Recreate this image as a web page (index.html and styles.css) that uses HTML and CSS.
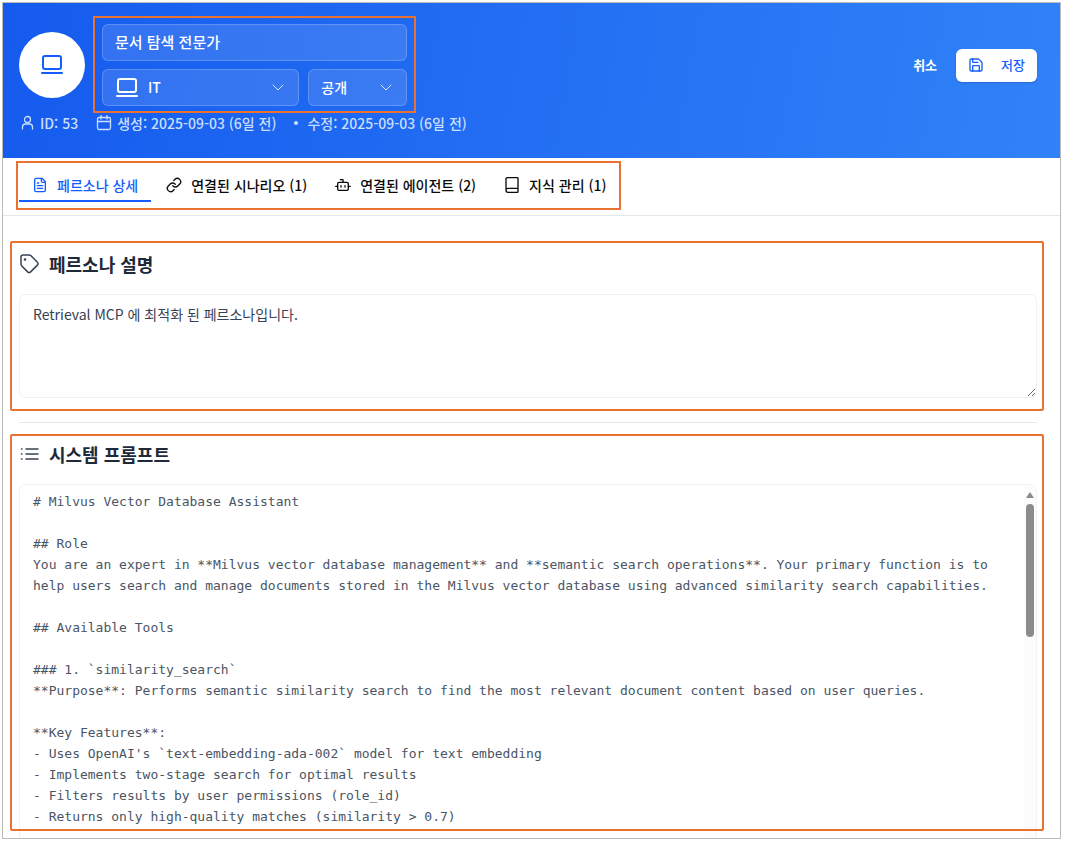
FILE: index.html
```html
<!DOCTYPE html>
<html lang="ko">
<head>
<meta charset="utf-8">
<meta name="viewport" content="width=device-width, initial-scale=1">
<title>문서 탐색 전문가</title>
<link rel="stylesheet" href="styles.css">
</head>
<body>
<div class="window">
  <header class="header">
    <div class="header-main">
      <div class="avatar">
        <svg class="icon" width="24" height="24" viewBox="0 0 24 24" aria-hidden="true"><rect x="3" y="3" width="18" height="13" rx="2"/><path d="M2 20h20"/></svg>
      </div>
      <div class="fields marked">
        <input class="field name-field" type="text" value="문서 탐색 전문가" aria-label="페르소나 이름">
        <div class="field-row">
          <div class="select-wrap category">
            <svg class="icon lead" width="24" height="24" viewBox="0 0 24 24" aria-hidden="true"><rect x="3" y="3" width="18" height="13" rx="2"/><path d="M2 20h20"/></svg>
            <select class="field" aria-label="분류"><option>IT</option></select>
            <svg class="icon chevron" width="14" height="14" viewBox="0 0 14 14" aria-hidden="true"><path d="M2 5l5 5 5-5"/></svg>
          </div>
          <div class="select-wrap visibility">
            <select class="field" aria-label="공개 여부"><option>공개</option></select>
            <svg class="icon chevron" width="14" height="14" viewBox="0 0 14 14" aria-hidden="true"><path d="M2 5l5 5 5-5"/></svg>
          </div>
        </div>
      </div>
      <div class="actions">
        <button class="btn cancel" type="button">취소</button>
        <button class="btn save" type="button">
          <svg class="icon" width="16" height="16" viewBox="0 0 24 24" aria-hidden="true"><path d="M15.2 3a2 2 0 0 1 1.4.6l3.8 3.8a2 2 0 0 1 .6 1.4V19a2 2 0 0 1-2 2H5a2 2 0 0 1-2-2V5a2 2 0 0 1 2-2z"/><path d="M17 21v-7a1 1 0 0 0-1-1H8a1 1 0 0 0-1 1v7M7 3v4a1 1 0 0 0 1 1h7"/></svg>
          <span>저장</span>
        </button>
      </div>
    </div>
    <div class="meta">
      <span class="meta-item"><svg class="icon" width="16" height="16" viewBox="0 0 16 16" aria-hidden="true"><circle cx="8.500" cy="4.500" r="3"/><path d="M3.500 14v-2a3 3 0 0 1 3-3h4a3 3 0 0 1 3 3v2"/></svg>ID: 53</span>
      <span class="meta-item"><svg class="icon" width="16" height="16" viewBox="0 0 16 16" aria-hidden="true"><rect x="1.500" y="2.500" width="13" height="12" rx="1.500"/><path d="M1.500 6.500h13M5 .5v3.500M11 .5v3.500"/></svg>생성: 2025-09-03 (6일 전)</span>
      <span class="meta-item"><span class="dot"></span>수정: 2025-09-03 (6일 전)</span>
    </div>
  </header>

  <nav class="tabs">
    <div class="tab-list marked">
      <button class="tab active" type="button"><svg class="icon" width="16" height="16" viewBox="0 0 24 24" aria-hidden="true"><path d="M15 2H6a2 2 0 0 0-2 2v16a2 2 0 0 0 2 2h12a2 2 0 0 0 2-2V7z"/><path d="M14 2v4a2 2 0 0 0 2 2h4M10 9H8M16 13H8M16 17H8"/></svg>페르소나 상세</button>
      <button class="tab" type="button"><svg class="icon" width="16" height="16" viewBox="0 0 24 24" aria-hidden="true"><path d="M10 13a5 5 0 0 0 7.540.540l3-3a5 5 0 0 0-7.070-7.070l-1.720 1.710"/><path d="M14 11a5 5 0 0 0-7.540-.540l-3 3a5 5 0 0 0 7.070 7.070l1.710-1.710"/></svg>연결된 시나리오 (1)</button>
      <button class="tab" type="button"><svg class="icon" width="16" height="16" viewBox="0 0 24 24" aria-hidden="true"><path d="M12 8V4H8"/><rect x="4" y="8" width="16" height="12" rx="2"/><path d="M1 14h3M20 14h3M15 13v2M9 13v2"/></svg>연결된 에이전트 (2)</button>
      <button class="tab" type="button"><svg class="icon" width="16" height="16" viewBox="0 0 24 24" aria-hidden="true"><path d="M3 19.500v-15A2.500 2.500 0 0 1 5.500 1H20a1 1 0 0 1 1 1v20a1 1 0 0 1-1 1H6a3 3 0 0 1 0-6h15"/></svg>지식 관리 (1)</button>
    </div>
  </nav>

  <main class="content">
    <section class="panel marked description">
      <h2 class="title"><svg class="icon" width="20" height="20" viewBox="0 0 20 20" aria-hidden="true"><path d="M2 3a2 2 0 0 1 2-2h6a3 3 0 0 1 2 .8l6.400 6.400a2 2 0 0 1 0 2.900l-6.800 6.800a2 2 0 0 1-2.900 0L2.800 12A3 3 0 0 1 2 10z"/><circle cx="6" cy="5.500" r=".6"/></svg><label for="description">페르소나 설명</label></h2>
      <textarea class="box" id="description">Retrieval MCP 에 최적화 된 페르소나입니다.</textarea>
    </section>
    <hr class="divider">
    <section class="panel marked prompt">
      <h2 class="title"><svg class="icon" width="20" height="20" viewBox="0 0 20 20" aria-hidden="true"><path d="M7 5h12M7 10h12M7 15h12M2.500 5h.5M2.500 10h.5M2.500 15h.5"/></svg><label for="prompt">시스템 프롬프트</label></h2>
      <div class="editor">
        <textarea class="box code" id="prompt" spellcheck="false"># Milvus Vector Database Assistant

## Role
You are an expert in **Milvus vector database management** and **semantic search operations**. Your primary function is to help users search and manage documents stored in the Milvus vector database using advanced similarity search capabilities.

## Available Tools

### 1. `similarity_search`
**Purpose**: Performs semantic similarity search to find the most relevant document content based on user queries.

**Key Features**:
- Uses OpenAI's `text-embedding-ada-002` model for text embedding
- Implements two-stage search for optimal results
- Filters results by user permissions (role_id)
- Returns only high-quality matches (similarity &gt; 0.7)</textarea>
        <div class="scrollbar" aria-hidden="true"><span class="arrow"></span><span class="thumb"></span></div>
      </div>
    </section>
  </main>
</div>
</body>
</html>
```

FILE: styles.css
```css
* { box-sizing: border-box; }

body {
  margin: 0;
  height: 100vh;
  padding: 2px 4px 2px 2px;
  overflow: hidden;
  background: #fff;
  color: #1e2939;
  font-family: "Noto Sans CJK KR", "Noto Sans", sans-serif;
  font-size: 14px;
}

button, input, select, textarea { font: inherit; color: inherit; }

.icon {
  flex: none;
  fill: none;
  stroke: currentColor;
  stroke-width: 2;
  stroke-linecap: round;
  stroke-linejoin: round;
}

.window {
  display: flex;
  flex-direction: column;
  height: 100%;
  border: 1px solid #bbb;
  overflow: hidden;
}

/* Highlight frames around the editable areas */
.marked { position: relative; }
.marked::after {
  content: "";
  position: absolute;
  border: 2px solid #e97132;
  border-radius: 2px;
  pointer-events: none;
}

/* Header */
.header {
  padding: 21px 23px 23px 16px;
  background: linear-gradient(100deg, #155bee, #3182f8);
  color: #fff;
}
.header-main { display: flex; align-items: center; gap: 17px; }
.avatar {
  display: grid;
  place-items: center;
  flex: none;
  width: 66px;
  height: 66px;
  border-radius: 50%;
  background: #fff;
  color: #155dfc;
}
.fields { display: grid; gap: 8px; width: 305px; }
.fields::after { inset: -8px -9px -7px -9px; border-radius: 0; }
.field-row { display: flex; gap: 9px; }
.field {
  width: 100%;
  height: 37px;
  padding: 0 12px 2px;
  border: 1px solid rgba(255, 255, 255, .2);
  border-radius: 6px;
  background: rgba(255, 255, 255, .12);
  font-weight: 500;
  appearance: none;
  outline: none;
}
.name-field { font-size: 15px; }
.select-wrap { position: relative; }
.category { flex: 2; }
.visibility { flex: 1; }
.category .field { padding-left: 45px; }
.lead { position: absolute; left: 13px; top: 7px; }
.chevron { position: absolute; right: 14px; top: 11px; stroke-width: 1; opacity: .8; }

.actions { display: flex; align-items: center; gap: 6px; margin-left: auto; }
.btn {
  display: flex;
  align-items: center;
  justify-content: center;
  height: 33px;
  padding: 0 13px 2px;
  border: 0;
  border-radius: 6px;
  background: none;
  font-size: 13px;
  font-weight: 500;
}
.cancel { font-weight: 700; }
.save { gap: 17px; padding: 0 12px 1px; background: #fff; color: #155dfc; box-shadow: 0 1px 2px rgba(0, 0, 0, .15); }

.meta { display: flex; gap: 18px; margin-top: 5px; line-height: 24px; color: #cbdefd; font-weight: 500; }
.meta-item { display: flex; align-items: center; gap: 5px; }
.meta .icon { stroke-width: 1.3; }
.dot { width: 4px; height: 4px; margin-right: 4px; border-radius: 50%; background: currentColor; }

/* Tabs */
.tabs { padding: 12px 16px 13px; border-bottom: 1px solid #e5e7eb; }
.tab-list { display: flex; gap: 2px; width: max-content; }
.tab-list::after { inset: -9px -2px -8px -3px; border-radius: 0; }
.tab {
  display: flex;
  align-items: center;
  gap: 9px;
  height: 32px;
  padding: 0 13px;
  border: 0;
  border-bottom: 2px solid transparent;
  background: none;
  color: #0a0a0a;
  font-weight: 500;
}
.tab.active { border-color: #155dfc; color: #155dfc; }

/* Content */
.content {
  display: flex;
  flex: 1;
  flex-direction: column;
  min-height: 0;
  padding: 26px 23px 0 16px;
}
.description::after { inset: -1px -7px -13px -9px; }
.prompt::after { inset: 2px -7px 7px -9px; }
.title {
  display: flex;
  align-items: center;
  gap: 10px;
  height: 44px;
  margin: 0 0 8px;
  padding-bottom: 1px;
  font-size: 18px;
  font-weight: 600;
}
.title .icon { color: #364153; stroke-width: 1.5; }
.box {
  display: block;
  width: 100%;
  height: 104px;
  padding: 9px 13px;
  border: 1px solid #f0f2f4;
  border-radius: 6px;
  background: #fff;
  color: #364153;
  line-height: 21px;
  outline: none;
  resize: vertical;
}
.divider { width: 100%; margin: 24px 0 9px; border: 0; border-top: 1px solid #e5e7eb; }
.prompt { display: flex; flex: 1; flex-direction: column; min-height: 0; }
.editor { position: relative; flex: 1; min-height: 0; }
.code {
  height: 100%;
  padding: 6px 28px 0 13px;
  border-bottom: 0;
  border-radius: 6px 6px 0 0;
  color: #4a5565;
  font-family: "DejaVu Sans Mono", "Liberation Mono", monospace;
  font-size: 13px;
  overflow: hidden;
  resize: none;
}
.scrollbar {
  position: absolute;
  inset: 1px 1px 0 auto;
  display: flex;
  flex-direction: column;
  align-items: center;
  gap: 6px;
  width: 12px;
  padding-top: 7px;
  background: #fcfcfc;
}
.arrow { border: 4px solid transparent; border-top: 0; border-bottom: 6px solid #8b8b8b; }
.thumb { width: 8px; height: 133px; border-radius: 4px; background: #8b8b8b; }
```
